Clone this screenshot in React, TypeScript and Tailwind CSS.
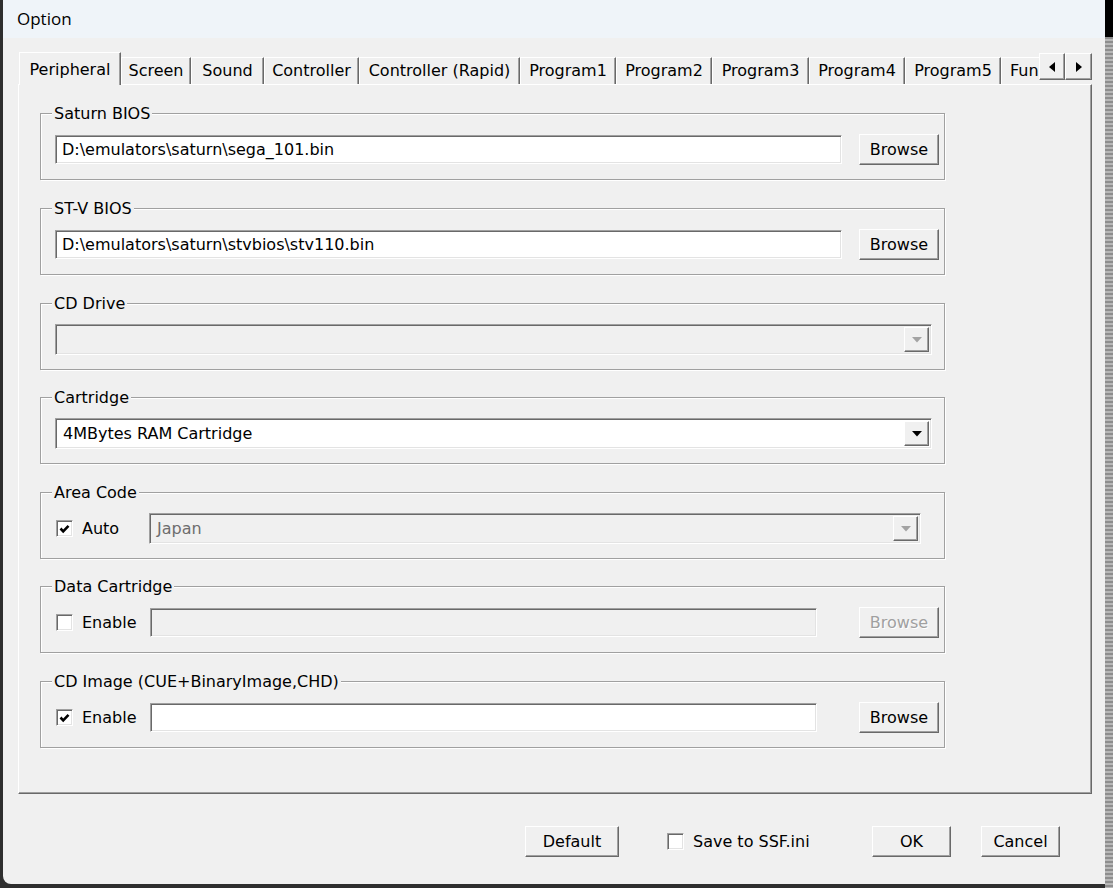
import React from 'react';

const raised =
  'border border-t-white border-l-white border-r-[#696969] border-b-[#696969] shadow-[inset_-1px_-1px_0_#a0a0a0] bg-[#f0f0f0]';
const sunken =
  'border border-t-[#a0a0a0] border-l-[#a0a0a0] border-r-white border-b-white shadow-[inset_1px_1px_0_#696969,inset_-1px_-1px_0_#e3e3e3]';

const tabs = [
  { label: 'Screen', w: 'w-[70px]' },
  { label: 'Sound', w: 'w-[73px]' },
  { label: 'Controller', w: 'w-[95px]' },
  { label: 'Controller (Rapid)', w: 'w-[161px]' },
  { label: 'Program1', w: 'w-[96px]' },
  { label: 'Program2', w: 'w-[96px]' },
  { label: 'Program3', w: 'w-[97px]' },
  { label: 'Program4', w: 'w-[96px]' },
  { label: 'Program5', w: 'w-[96px]' },
];

function Check({ checked }: { checked: boolean }) {
  return (
    <span className={`flex h-[17px] w-[17px] shrink-0 items-center justify-center bg-white ${sunken}`}>
      {checked && (
        <svg width="11" height="10" viewBox="0 0 11 10">
          <path d="M1.5 4.5 L4.2 7.3 L9.5 1.8" fill="none" stroke="#000" strokeWidth="2.6" />
        </svg>
      )}
    </span>
  );
}

function DownArrow({ disabled }: { disabled?: boolean }) {
  return (
    <svg width="10" height="6" viewBox="0 0 10 6">
      <path d="M0 0 H10 L5 5.5 Z" fill={disabled ? '#a3a3a3' : '#000'} />
    </svg>
  );
}

function Button({ label, w, disabled }: { label: string; w: string; disabled?: boolean }) {
  return (
    <button
      className={`flex h-[31px] shrink-0 items-center justify-center ${w} ${raised} ${
        disabled ? 'text-[#a0a0a0] [text-shadow:1px_1px_0_#fff]' : 'text-black'
      }`}
    >
      {label}
    </button>
  );
}

function Combo({ w, value, disabled }: { w: string; value: string; disabled?: boolean }) {
  return (
    <div
      className={`flex h-[31px] items-center p-[2px] ${w} ${sunken} ${
        disabled ? 'bg-[#f0f0f0] text-[#6d6d6d]' : 'bg-white text-black'
      }`}
    >
      <span className="flex-1 pl-[5px]">{value}</span>
      <span className={`flex h-full w-[25px] items-center justify-center ${raised}`}>
        <DownArrow disabled={disabled} />
      </span>
    </div>
  );
}

function Field({ w, value, disabled }: { w: string; value?: string; disabled?: boolean }) {
  return (
    <div
      className={`flex h-[29px] items-center pl-[6px] ${w} ${sunken} ${
        disabled ? 'bg-[#f0f0f0]' : 'bg-white'
      }`}
    >
      {value}
    </div>
  );
}

function Group({
  title,
  className,
  children,
}: {
  title: string;
  className: string;
  children: React.ReactNode;
}) {
  return (
    <div
      className={`h-[67px] w-[905px] border border-[#a0a0a0] shadow-[inset_1px_1px_0_#fff,1px_1px_0_#fff] ${className}`}
    >
      <div className="-mt-[10px] ml-[11px] h-[20px] w-fit bg-[#f0f0f0] px-[2px] leading-[20px]">{title}</div>
      <div className="mt-[10px] flex h-[31px] items-center pl-[14px]">{children}</div>
    </div>
  );
}

export default function App() {
  return (
    <div className="flex h-[888px] w-[1113px] overflow-hidden bg-[#2e2e2e] font-['DejaVu_Sans',sans-serif] text-[16px] text-black">
      <div className="ml-[3px] flex h-[884px] w-[1102px] flex-col overflow-hidden rounded-bl-[8px] bg-[#f0f0f0]">
        <div className="flex h-[38px] items-center bg-[#eff4f9] pl-[14px] font-['Open_Sans',sans-serif] text-[17px]">
          Option
        </div>

        <div className="relative z-10 -mb-px flex h-[47px] items-end pl-[16px]">
          <div className="flex w-[1020px] items-end">
            <div className="flex h-[33px] w-[102px] shrink-0 items-start justify-center border-t border-l border-r border-t-white border-l-white border-r-[#696969] bg-[#f0f0f0] pt-[5px] shadow-[inset_-1px_0_0_#a0a0a0]">
              Peripheral
            </div>
            {tabs.map((t) => (
              <div
                key={t.label}
                className={`mb-px flex h-[27px] shrink-0 items-center justify-center border-t border-l border-r border-t-white border-l-white border-r-[#696969] pb-[1px] shadow-[inset_-1px_0_0_#a0a0a0] ${t.w}`}
              >
                {t.label}
              </div>
            ))}
            <div className="mb-px flex h-[27px] w-[38px] shrink-0 items-center border-t border-l border-t-white border-l-white pb-[1px] pl-[8px]">
              Fun
            </div>
          </div>
          <div className="mb-[5px] flex h-[27px]">
            <span className={`flex w-[26px] items-center justify-center ${raised}`}>
              <svg width="6" height="10" viewBox="0 0 6 10">
                <path d="M6 0 V10 L0 5 Z" fill="#000" />
              </svg>
            </span>
            <span className={`flex w-[27px] items-center justify-center ${raised}`}>
              <svg width="6" height="10" viewBox="0 0 6 10">
                <path d="M0 0 V10 L6 5 Z" fill="#000" />
              </svg>
            </span>
          </div>
        </div>

        <div className="ml-[15px] flex h-[710px] w-[1074px] flex-col border border-t-white border-l-white border-r-[#696969] border-b-[#696969] pl-[21px] shadow-[inset_-1px_-1px_0_#a0a0a0]">
          <Group title="Saturn BIOS" className="mt-[28px]">
            <Field w="w-[787px]" value="D:\emulators\saturn\sega_101.bin" />
            <span className="ml-[17px]">
              <Button label="Browse" w="w-[80px]" />
            </span>
          </Group>

          <Group title="ST-V BIOS" className="mt-[28px]">
            <Field w="w-[787px]" value="D:\emulators\saturn\stvbios\stv110.bin" />
            <span className="ml-[17px]">
              <Button label="Browse" w="w-[80px]" />
            </span>
          </Group>

          <Group title="CD Drive" className="mt-[28px]">
            <Combo w="w-[877px]" value="" disabled />
          </Group>

          <Group title="Cartridge" className="mt-[27px]">
            <Combo w="w-[877px]" value="4MBytes RAM Cartridge" />
          </Group>

          <Group title="Area Code" className="mt-[28px]">
            <div className="flex w-[94px] items-center pl-px">
              <Check checked />
              <span className="ml-[9px]">Auto</span>
            </div>
            <Combo w="w-[772px]" value="Japan" disabled />
          </Group>

          <Group title="Data Cartridge" className="mt-[27px]">
            <div className="flex w-[95px] items-center pl-px">
              <Check checked={false} />
              <span className="ml-[9px]">Enable</span>
            </div>
            <Field w="w-[667px]" disabled />
            <span className="ml-[42px]">
              <Button label="Browse" w="w-[80px]" disabled />
            </span>
          </Group>

          <Group title="CD Image (CUE+BinaryImage,CHD)" className="mt-[28px]">
            <div className="flex w-[95px] items-center pl-px">
              <Check checked />
              <span className="ml-[9px]">Enable</span>
            </div>
            <Field w="w-[667px]" />
            <span className="ml-[42px]">
              <Button label="Browse" w="w-[80px]" />
            </span>
          </Group>
        </div>

        <div className="mt-[32px] flex h-[31px] items-center">
          <span className="ml-[522px]">
            <Button label="Default" w="w-[94px]" />
          </span>
          <div className="ml-[48px] flex w-[205px] items-center">
            <Check checked={false} />
            <span className="ml-[9px]">Save to SSF.ini</span>
          </div>
          <Button label="OK" w="w-[79px]" />
          <span className="ml-[30px]">
            <Button label="Cancel" w="w-[79px]" />
          </span>
        </div>
      </div>

      <div className="flex flex-1 flex-col">
        <div className="h-[37px] bg-black" />
        <div className="flex-1 bg-[repeating-linear-gradient(180deg,#8e8e8e_0px,#8e8e8e_2px,#b8b8b8_2px,#b8b8b8_4px)]" />
      </div>
    </div>
  );
}
